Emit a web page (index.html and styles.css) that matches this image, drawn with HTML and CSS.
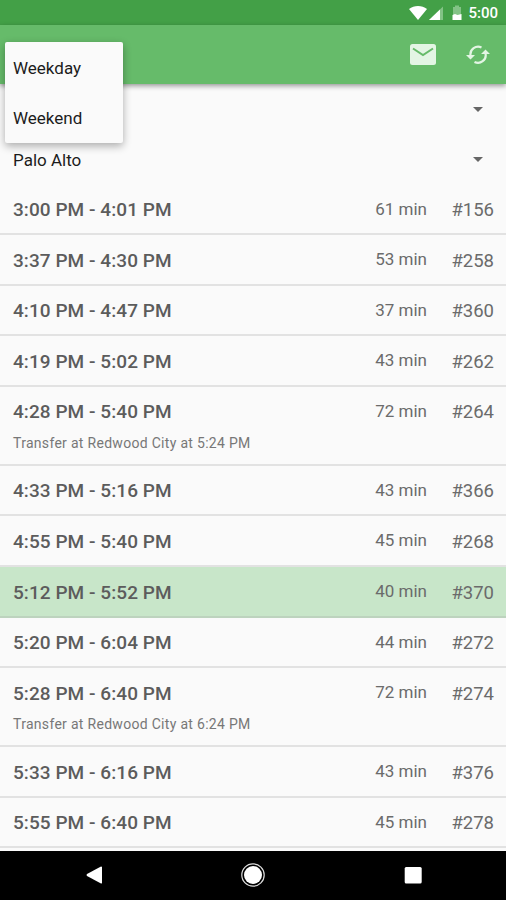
FILE: index.html
```html
<!DOCTYPE html>
<html lang="en">
<head>
<meta charset="utf-8">
<title>Train schedule</title>
<link rel="stylesheet" href="styles.css">
</head>
<body>
<div class="screen">
  <div class="status">
    <svg class="signals" width="54" height="25" viewBox="0 0 54 25">
      <path d="M0 9C5 5 13 5 18 9L9 20Z" fill="#fff"/>
      <path d="M34 6.500V20H20Z" fill="#83c386"/>
      <path d="M31 9.500V20H20Z" fill="#fff"/>
      <path d="M44 7h2V5.500h4V7h2v13h-8Z" fill="#83c386"/>
      <path d="M43.500 15l2.500-1 2.500 1 4-1v6h-9Z" fill="#fff"/>
    </svg>
    <span class="clock">5:00</span>
  </div>
  <header class="toolbar">
    <svg class="mail" width="26" height="21" viewBox="0 0 26 21">
      <rect width="26" height="21" rx="2.500" fill="#e3f5e4"/>
      <path d="M3 4.500L13 11L23 4.500" fill="none" stroke="#66bb6a" stroke-width="2"/>
    </svg>
    <svg class="refresh" width="24" height="20" viewBox="0 0 24 20" fill="none" stroke="#e3f5e4" stroke-width="2.200">
      <path d="M4.500 10.500A7.700 7.700 0 0 1 15.500 2.500M19.500 8.500A7.700 7.700 0 0 1 8.500 17"/>
      <path d="M0 10h9L4.500 14.500ZM15 9h9L19.500 4.500Z" fill="#e3f5e4" stroke="none"/>
    </svg>
  </header>
  <main class="content">
    <div class="picker"><span></span><i class="caret"></i></div>
    <div class="picker"><span>Palo Alto</span><i class="caret"></i></div>
    <ul class="trains">
      <li class="train"><b class="time">3:00 PM - 4:01 PM</b><span class="mins">61 min</span><span class="num">#156</span></li>
      <li class="train"><b class="time">3:37 PM - 4:30 PM</b><span class="mins">53 min</span><span class="num">#258</span></li>
      <li class="train"><b class="time">4:10 PM - 4:47 PM</b><span class="mins">37 min</span><span class="num">#360</span></li>
      <li class="train"><b class="time">4:19 PM - 5:02 PM</b><span class="mins">43 min</span><span class="num">#262</span></li>
      <li class="train tall"><b class="time">4:28 PM - 5:40 PM</b><span class="mins">72 min</span><span class="num">#264</span><span class="note">Transfer at Redwood City at 5:24 PM</span></li>
      <li class="train"><b class="time">4:33 PM - 5:16 PM</b><span class="mins">43 min</span><span class="num">#366</span></li>
      <li class="train"><b class="time">4:55 PM - 5:40 PM</b><span class="mins">45 min</span><span class="num">#268</span></li>
      <li class="train next"><b class="time">5:12 PM - 5:52 PM</b><span class="mins">40 min</span><span class="num">#370</span></li>
      <li class="train"><b class="time">5:20 PM - 6:04 PM</b><span class="mins">44 min</span><span class="num">#272</span></li>
      <li class="train tall"><b class="time">5:28 PM - 6:40 PM</b><span class="mins">72 min</span><span class="num">#274</span><span class="note">Transfer at Redwood City at 6:24 PM</span></li>
      <li class="train"><b class="time">5:33 PM - 6:16 PM</b><span class="mins">43 min</span><span class="num">#376</span></li>
      <li class="train"><b class="time">5:55 PM - 6:40 PM</b><span class="mins">45 min</span><span class="num">#278</span></li>
    </ul>
  </main>
  <nav class="navbar">
    <svg width="26" height="26" viewBox="0 0 26 26"><path d="M20 5v16a1 1 0 0 1-1 .500L5 14q-1-1 0-2L19 4.500q1 0 1 .500Z" fill="#fff"/></svg>
    <svg width="26" height="26" viewBox="0 0 26 26"><circle cx="13" cy="13" r="11.200" fill="none" stroke="#ddd" stroke-width="1.200"/><circle cx="13" cy="13" r="9" fill="#fff"/></svg>
    <svg width="26" height="26" viewBox="0 0 26 26"><rect x="4.700" y="5" width="17" height="16.500" rx="1.500" fill="#fff"/></svg>
  </nav>
  <div class="menu">
    <div class="option">Weekday</div>
    <div class="option">Weekend</div>
  </div>
</div>
</body>
</html>
```
FILE: styles.css
```css
* { box-sizing: border-box; }
body { margin: 0; font-family: Roboto, "Liberation Sans", sans-serif; }
.screen { position: relative; width: 506px; height: 900px; overflow: hidden; display: flex; flex-direction: column; background: #fafafa; }
.status { flex: none; height: 25px; display: flex; align-items: center; justify-content: flex-end; padding-right: 8px; background: #43a047; color: #fff; }
.clock { width: 35px; font-size: 15px; font-weight: 500; line-height: 25px; padding-top: 2px; text-align: right; white-space: nowrap; }
.toolbar { flex: none; z-index: 1; height: 59px; display: flex; align-items: center; justify-content: flex-end; gap: 30px; padding: 0 16px 0 0; background: #66bb6a; box-shadow: 0 2px 5px rgba(0, 0, 0, .4); }
.content { flex: none; height: 767px; overflow: hidden; }
.picker { height: 50px; display: flex; align-items: center; justify-content: space-between; padding: 1px 23px 0 13px; font-size: 17px; color: #1c1c1c; }
.caret { border: 5px solid transparent; border-top-color: #666; border-bottom: 0; }
.trains { list-style: none; margin: 0; padding: .5px 0 0; }
.train { height: 50.6px; display: grid; grid-template-columns: 1fr auto 67px; grid-template-rows: 50px; align-items: center; padding: 0 12px 0 13px; border-bottom: 2px solid #e2e2e2; color: #6b6b6b; white-space: nowrap; }
.tall { height: 79px; grid-template-rows: 50px 12px; }
.next { background: #c8e6c9; border-bottom-color: #bdd3be; }
.time { font-size: 19px; font-weight: 500; letter-spacing: .06px; color: #5c5c5c; }
.mins { font-size: 17px; padding-bottom: 2px; }
.num { font-size: 18.5px; text-align: right; padding-top: 1px; }
.note { grid-column: 1 / 4; font-size: 14px; letter-spacing: .3px; color: #777; }
.navbar { flex: none; height: 49px; display: flex; align-items: center; justify-content: space-between; padding: 0 80px 1px 82px; background: #000; }
.navbar svg:nth-child(2) { margin-right: 2px; }
.menu { position: absolute; z-index: 2; left: 5px; top: 42px; width: 118px; height: 101px; background: #fafafa; border-radius: 2px; box-shadow: 0 3px 9px rgba(0, 0, 0, .32); }
.option { height: 50px; padding: 1px 0 0 8px; line-height: 50px; font-size: 17px; color: #1c1c1c; }
```
